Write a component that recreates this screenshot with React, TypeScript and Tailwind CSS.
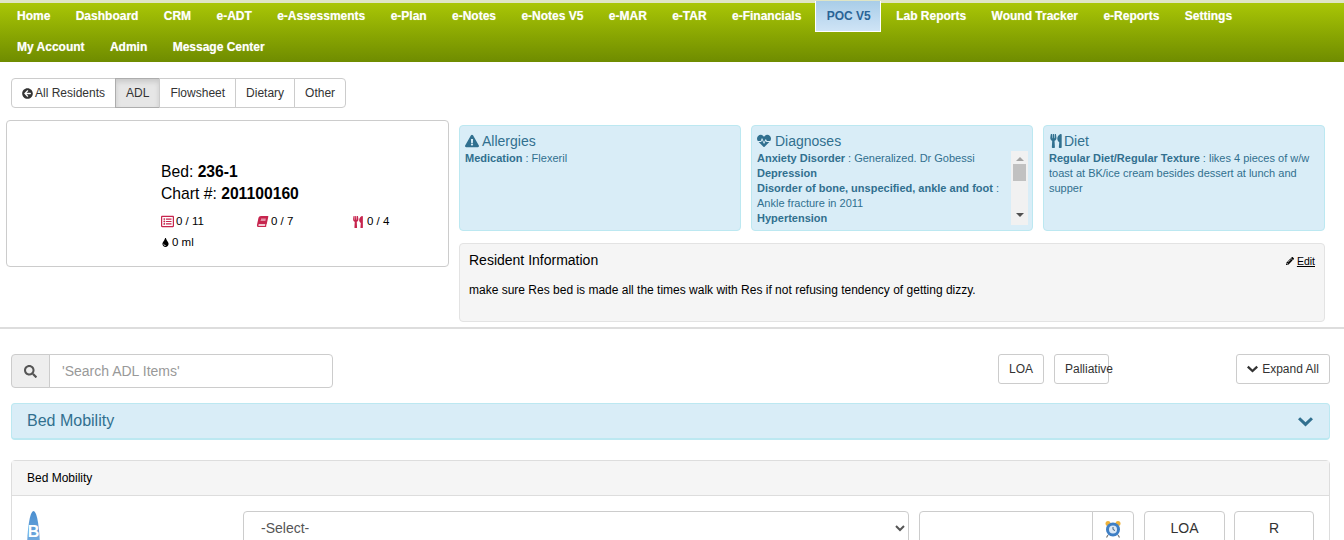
import {
  FaArrowCircleLeft,
  FaBook,
  FaExclamationTriangle,
  FaHeartbeat,
  FaPencilAlt,
  FaRegListAlt,
  FaSearch,
  FaTint,
  FaUtensils,
} from "react-icons/fa";

const navItems = [
  "Home",
  "Dashboard",
  "CRM",
  "e-ADT",
  "e-Assessments",
  "e-Plan",
  "e-Notes",
  "e-Notes V5",
  "e-MAR",
  "e-TAR",
  "e-Financials",
  "POC V5",
  "Lab Reports",
  "Wound Tracker",
  "e-Reports",
  "Settings",
  "My Account",
  "Admin",
  "Message Center",
];

const AlarmClock = () => (
  <svg width="16" height="18" viewBox="0 0 16 18">
    <circle cx="3" cy="3.5" r="2.5" fill="#eeb23a" />
    <circle cx="13" cy="3.5" r="2.5" fill="#eeb23a" />
    <path d="M3 15l-1.5 2.5M13 15l1.5 2.5" stroke="#777" strokeWidth="1.2" />
    <circle cx="8" cy="9.5" r="7" fill="#3f7fc4" />
    <circle cx="8" cy="9.5" r="4" fill="#dbe8f5" />
    <path d="M8 7v2.5l2 1" stroke="#44607c" strokeWidth="1" fill="none" />
  </svg>
);

const Chevron = ({ className }: { className: string }) => (
  <svg className={className} viewBox="0 0 14 10" fill="currentColor">
    <path d="M0 3L2 1L7 5.6L12 1L14 3L7 9.6Z" />
  </svg>
);

const App = () => {
  return (
    <div className="h-[540px] overflow-hidden bg-white font-['Liberation_Sans',Arial,sans-serif] text-[12px] text-[#333]">
      {/* NAV */}
      <nav className="flex h-[62px] flex-wrap content-start border-t-[3px] border-[#dfe5c5] bg-gradient-to-b from-[#a9c606] to-[#6f8c00] pr-[14px] pl-[4.3px]">
        {navItems.map((item) => (
          <a
            key={item}
            className={
              item === "POC V5"
                ? "-mt-[2px] mr-[2.7px] mb-[2px] ml-[0.7px] flex h-[31px] items-center border-x border-b border-white bg-gradient-to-b from-[#a9cde8] to-[#cfe4f6] pr-[9px] pl-[11px] font-bold text-[#2a6496]"
                : "mx-[0.7px] mb-[5px] flex h-[26px] items-center px-3 font-bold text-white [text-shadow:0_0_1px_rgba(255,255,255,0.5)]"
            }
          >
            {item}
          </a>
        ))}
      </nav>

      {/* TABS */}
      <div className="mt-4 ml-[11px] flex h-[30px]">
        <button className="flex items-center gap-[2px] rounded-l-[4px] border border-[#ccc] bg-white px-[10px] text-[#333]">
          <FaArrowCircleLeft className="text-[11px]" /> All Residents
        </button>
        <button className="-ml-px border border-[#adadad] bg-[#e6e6e6] px-[10px] shadow-[inset_0_3px_5px_rgba(0,0,0,0.125)]">
          ADL
        </button>
        <button className="-ml-px border border-[#ccc] bg-white px-[10px]">Flowsheet</button>
        <button className="-ml-px border border-[#ccc] bg-white px-[10px]">Dietary</button>
        <button className="-ml-px rounded-r-[4px] border border-[#ccc] bg-white px-[10px]">Other</button>
      </div>

      {/* RESIDENT */}
      <div className="mt-3 ml-[6px] flex">
        <div className="h-[147px] w-[443px] rounded-[4px] border border-[#ccc] pt-[40px] pl-[154px] text-black">
          <div className="text-[15.7px] leading-[22px]">
            Bed: <b>236-1</b>
          </div>
          <div className="text-[15.7px] leading-[22px]">
            Chart #: <b>201100160</b>
          </div>
          <div className="mt-[6px] flex h-[21px] items-center text-[11.5px]">
            <span className="flex w-[96px] items-center gap-[2px]">
              <FaRegListAlt className="text-[13px] text-[#c7254e]" /> 0 / 11
            </span>
            <span className="flex w-[95px] items-center gap-[3px]">
              <FaBook className="-skew-x-12 text-[11px] text-[#c7254e]" /> 0 / 7
            </span>
            <span className="flex items-center gap-[3px]">
              <FaUtensils className="text-[12px] text-[#c7254e]" /> 0 / 4
            </span>
          </div>
          <div className="flex h-[21px] items-center gap-[2px] text-[11.5px]">
            <FaTint className="text-[9px]" /> 0 ml
          </div>
        </div>

        <div className="mt-[5px] ml-[10px] w-[866px]">
          <div className="flex gap-[10px]">
            <div className="h-[106px] w-[282px] rounded-[4px] border border-[#bce8f1] bg-[#d9edf7] px-[5px] pt-[6px] text-[11px] leading-[15px] text-[#31708f]">
              <div className="mb-px flex h-[18px] items-center gap-[3px] text-[14px]">
                <FaExclamationTriangle /> Allergies
              </div>
              <div>
                <b>Medication</b> : Flexeril
              </div>
            </div>

            <div className="flex h-[106px] w-[282px] rounded-[4px] border border-[#bce8f1] bg-[#d9edf7] pt-[6px] pl-[5px] text-[11px] leading-[15px] text-[#31708f]">
              <div className="w-[254px]">
                <div className="mb-px flex h-[18px] items-center gap-[4px] text-[14px]">
                  <FaHeartbeat /> Diagnoses
                </div>
                <b>Anxiety Disorder</b> : Generalized. Dr Gobessi
                <br />
                <b>Depression</b>
                <br />
                <b>Disorder of bone, unspecified, ankle and foot</b> :
                <br />
                Ankle fracture in 2011
                <br />
                <b>Hypertension</b>
              </div>
              <div className="mt-[19px] flex h-[74px] w-[17px] flex-col items-center bg-[#f1f1f1] pt-[6px]">
                <div className="h-0 w-0 border-x-[4px] border-b-[4px] border-x-transparent border-b-[#a3a3a3]" />
                <div className="mt-[3px] h-[17px] w-[13px] bg-[#c1c1c1]" />
                <div className="mt-auto mb-[8px] h-0 w-0 border-x-[4px] border-t-[4px] border-x-transparent border-t-[#505050]" />
              </div>
            </div>

            <div className="h-[106px] w-[282px] rounded-[4px] border border-[#bce8f1] bg-[#d9edf7] px-[5px] pt-[6px] text-[11px] leading-[15px] text-[#31708f]">
              <div className="mb-px flex h-[18px] items-center gap-[1px] text-[14px]">
                <FaUtensils /> Diet
              </div>
              <div>
                <b>Regular Diet/Regular Texture</b> : likes 4 pieces of w/w toast at BK/ice cream besides dessert at
                lunch and supper
              </div>
            </div>
          </div>

          <div className="mt-3 h-[79px] rounded-[4px] border border-[#e3e3e3] bg-[#f5f5f5] px-[9px] pt-[8px] text-black">
            <div className="flex items-start justify-between">
              <span className="text-[14px] leading-[17px]">Resident Information</span>
              <a className="mt-[3px] flex items-center gap-[3px] text-[10.5px] leading-[12px]">
                <FaPencilAlt className="text-[8px]" /> <span className="underline">Edit</span>
              </a>
            </div>
            <p className="mt-[14px] text-[12px] leading-[15px]">
              make sure Res bed is made all the times walk with Res if not refusing tendency of getting dizzy.
            </p>
          </div>
        </div>
      </div>

      <hr className="mt-[5px] border-t-2 border-[#ddd]" />

      {/* SEARCH ROW */}
      <div className="mt-[25px] flex items-start pr-[14px] pl-[11px]">
        <div className="flex h-[34px] w-[322px]">
          <span className="flex w-[39px] items-center justify-center rounded-l-[4px] border border-[#ccc] bg-[#eee] text-[13px] text-[#555]">
            <FaSearch />
          </span>
          <div className="-ml-px flex flex-1 items-center rounded-r-[4px] border border-[#ccc] pl-3 text-[14px] text-[#999]">
            'Search ADL Items'
          </div>
        </div>
        <button className="ml-[665px] h-[30px] w-[46px] rounded-[3px] border border-[#ccc]">LOA</button>
        <button className="ml-[10px] h-[30px] w-[55px] whitespace-nowrap rounded-[3px] border border-[#ccc] pl-[10px] text-left">
          Palliative
        </button>
        <button className="ml-auto flex h-[30px] w-[94px] items-center justify-center gap-[4px] rounded-[3px] border border-[#ccc]">
          <Chevron className="h-[8px] w-[11px]" /> Expand All
        </button>
      </div>

      {/* ACCORDION */}
      <div className="mt-[15px] mr-[14px] ml-[11px] flex h-[37px] items-center justify-between rounded-[4px] border border-b-[2px] border-[#bce8f1] bg-[#d9edf7] pr-[16px] pl-[15px] text-[16px] text-[#31708f]">
        Bed Mobility
        <Chevron className="h-[11px] w-[15px]" />
      </div>

      {/* PANEL */}
      <div className="mt-[20px] mr-[14px] ml-[11px] rounded-t-[4px] border border-[#ddd]">
        <div className="flex h-[35px] items-center border-b border-[#ddd] bg-[#f5f5f5] pl-[15px] text-black">
          Bed Mobility
        </div>
        <div className="flex pt-[15px] pl-[15px]">
          <div className="h-[60px] w-[216px]">
            <div className="h-[40px] w-[13px] rounded-t-[50%_100%] bg-gradient-to-b from-[#4a8fd0] to-[#7fb2e3] pt-[13px] text-center text-[16px] leading-[16px] font-bold text-white">
              B
            </div>
          </div>
          <select className="h-[34px] w-[666px] rounded-[4px] border border-[#ccc] bg-white pl-[13px] text-[14px] text-[#555]">
            <option>-Select-</option>
          </select>
          <div className="ml-[10px] h-[34px] w-[174px] rounded-l-[4px] border border-[#ccc]" />
          <button className="-ml-px flex h-[34px] w-[42px] items-start justify-center rounded-r-[4px] border border-[#ccc] pt-[8px]">
            <AlarmClock />
          </button>
          <button className="ml-[10px] h-[34px] w-[81px] rounded-[4px] border border-[#ccc] text-[14px]">LOA</button>
          <button className="ml-[9px] h-[34px] w-[80px] rounded-[4px] border border-[#ccc] text-[14px]">R</button>
        </div>
      </div>
    </div>
  );
};

export default App;
